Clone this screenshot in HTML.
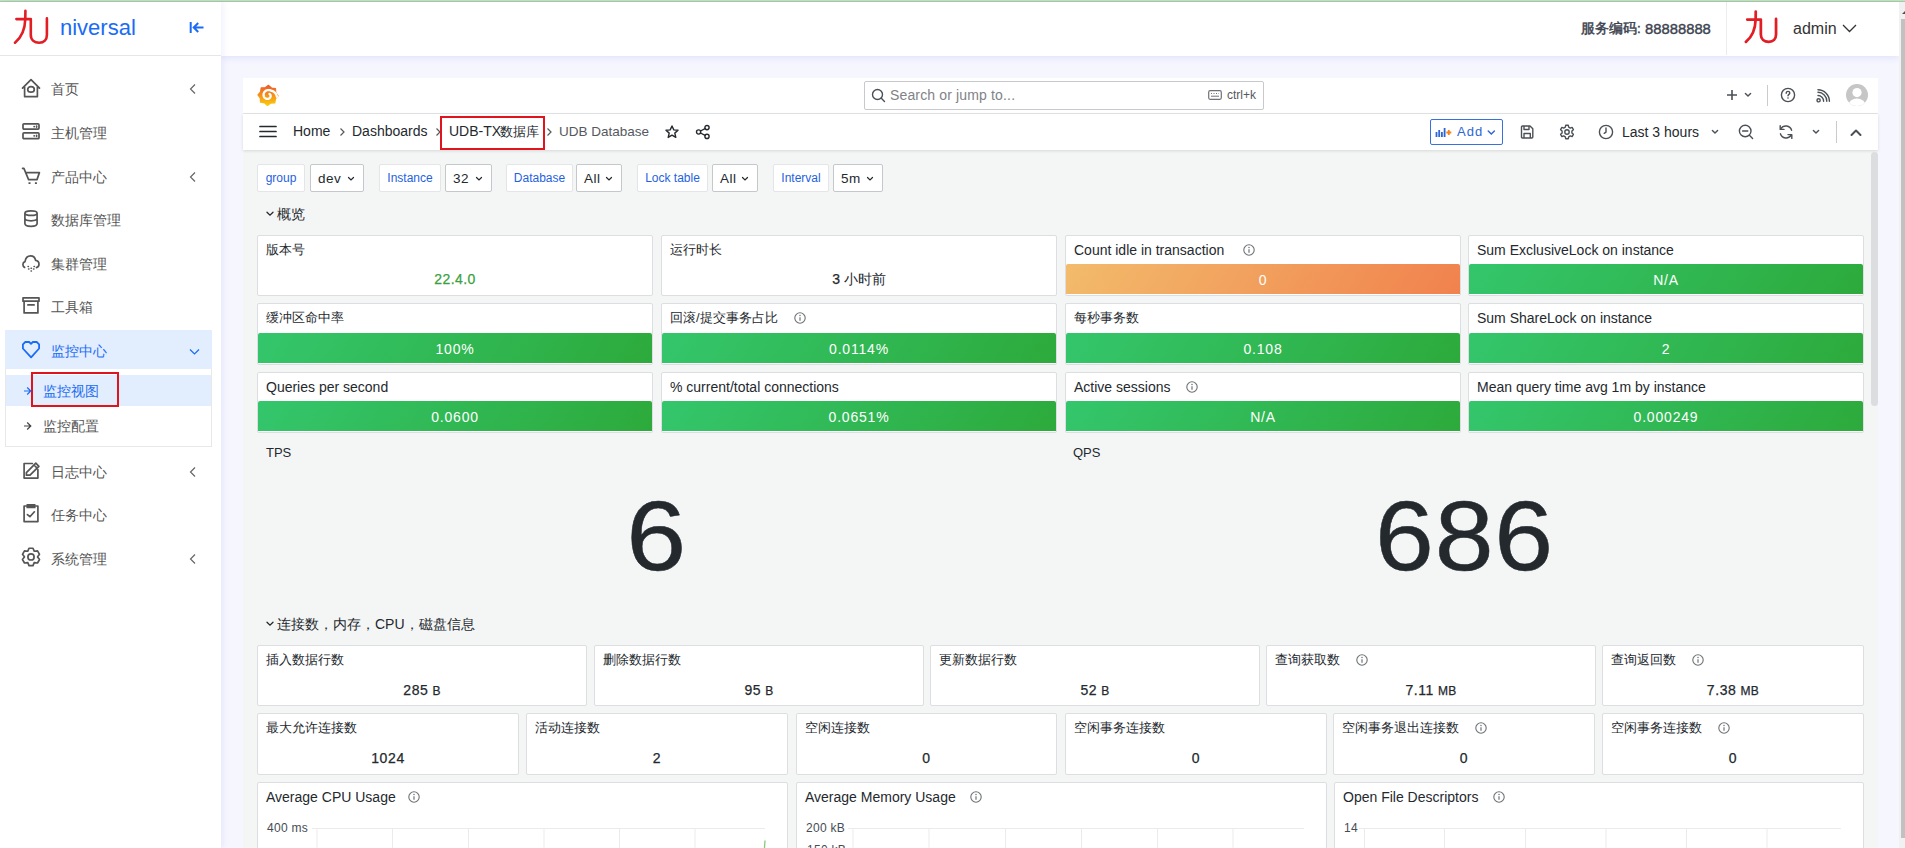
<!DOCTYPE html>
<html><head><meta charset="utf-8">
<style>
*{box-sizing:border-box}
html,body{margin:0;padding:0}
body{width:1905px;height:848px;overflow:hidden;position:relative;background:#f5f6fe;font-family:"Liberation Sans",sans-serif;color:#24292e}
.a{position:absolute}
.topline{left:0;top:0;width:1905px;height:2px;background:#c3e2c0;border-bottom:1px solid #a9c9a6}
/* sidebar */
#side{left:0;top:2px;width:221px;height:846px;background:#fff;box-shadow:2px 0 6px rgba(110,110,230,.10);z-index:5}
#side .logoline{left:0;top:53px;width:221px;height:1px;background:#e6e6e6}
.mi{position:absolute;left:0;width:221px;height:40px;font-size:14px;color:#555}
.mi .ic{position:absolute;left:22px;top:11px;width:18px;height:18px}
.mi .tx{position:absolute;left:51px;top:12px;line-height:16px;white-space:nowrap}
.mi .ch{position:absolute;left:188px;top:14px;width:10px;height:12px}
/* header */
#hdr{left:221px;top:2px;width:1678px;height:54px;background:#fff;box-shadow:0 2px 6px rgba(100,100,225,.13)}
/* scrollbar */
#sb{left:1899px;top:2px;width:6px;height:846px;background:#f1f1f1}
#sbt{left:1901px;top:19px;width:4px;height:819px;background:#c1c1c1}
/* grafana */
#gf{left:243px;top:78px;width:1635px;height:770px;background:#f4f5f5}
#gtop{left:243px;top:78px;width:1635px;height:36px;background:#fff;border-bottom:1px solid #e4e5e7}
#gbar{left:243px;top:114px;width:1635px;height:36px;background:#fff;box-shadow:0 1px 3px rgba(0,0,0,.12)}
.bc{position:absolute;top:0;font-size:14px;line-height:37px;white-space:nowrap;color:#24292e}
.sep{position:absolute;top:13px;width:8px;height:10px}
.ib{position:absolute}
.vl{position:absolute;top:164px;height:28px;background:#fff;border:1px solid #e3e5e8;border-radius:2px;font-size:12px;line-height:26px;color:#1f62e0;text-align:center;white-space:nowrap}
.vs{position:absolute;top:164px;height:28px;background:#fff;border:1px solid #c4c7cb;border-radius:2px;font-size:13.5px;line-height:27px;color:#24292e;padding-left:7px;white-space:nowrap;letter-spacing:.5px}
.vs svg{position:absolute;top:11px;width:8px;height:6px}
.rh{position:absolute;font-size:14px;line-height:16px;color:#24292e;white-space:nowrap}
.pn{position:absolute;background:#fff;border:1px solid #dcdee1;border-radius:2px}
.cj{font-size:13px;position:relative;top:-1.5px}
.pt{position:absolute;left:8px;top:6px;font-size:14px;line-height:17px;color:#24292e;white-space:nowrap}
.infi{display:inline-block;width:12px;height:12px;margin-left:16px;vertical-align:-1px}
.bar{position:absolute;left:0;right:0;bottom:1px;height:30px;border-radius:2px 2px 0 0;color:#fff;font-size:14px;line-height:32px;text-align:center;letter-spacing:.8px}
.gr{background:linear-gradient(120deg,#34c66c,#2daa3b)}
.or{background:linear-gradient(120deg,rgba(241,179,89,.89),rgba(239,114,56,.89))}
.val{position:absolute;left:0;right:0;text-align:center;font-size:14px;line-height:17px;color:#24292e;white-space:nowrap;-webkit-text-stroke:.25px currentColor}

</style></head><body>
<div class="a topline"></div>

<!-- SIDEBAR -->
<div id="side" class="a">
  <svg class="a" style="left:13px;top:7px" width="37" height="36" viewBox="0 0 37 36">
    <path d="M12.4 1.7 L12.3 10 C12 20 9 28 2 33.7 M3.4 10.1 H17.8 V26 C17.8 31 21.5 33.7 26.2 33.7 C31 33.7 33.9 30.5 33.9 26 V9.4" fill="none" stroke="#e21d23" stroke-width="2.6" stroke-linecap="round" stroke-linejoin="round"/>
  </svg>
  <div class="a" style="left:60px;top:11px;font-size:22px;line-height:30px;color:#1a6cf5;letter-spacing:0px">niversal</div>
  <svg class="a" style="left:189px;top:19px" width="16" height="13" viewBox="0 0 16 13">
    <path d="M1.7 1 V12 M14.5 6.5 H4.8 M9.2 2 L4.7 6.5 L9.2 11" fill="none" stroke="#1a6cf5" stroke-width="2"/>
  </svg>
  <div class="a logoline"></div>
  <div class="mi" style="top:67px"><svg class="ic" viewBox="0 0 18 18" style="overflow:visible"><path d="M0.5 8.1 L9 -0.4 L17.5 8.1 M2.6 7.2 V16.6 H15.4 V7.2" stroke="#555" stroke-width="1.7" fill="none" stroke-linecap="round" stroke-linejoin="round"/><ellipse cx="9" cy="9.4" rx="3.3" ry="2.7" stroke="#555" stroke-width="1.7" fill="none" stroke-linecap="round" stroke-linejoin="round"/></svg><span class="tx">首页</span><svg class="ch" viewBox="0 0 10 12"><path d="M7 1.5 L2.5 6 L7 10.5" fill="none" stroke="#666" stroke-width="1.2"/></svg></div>
<div class="mi" style="top:111px"><svg class="ic" viewBox="0 0 18 18" style="overflow:visible"><rect x="1" y="-0.1" width="16" height="5.2" rx="1" stroke="#555" stroke-width="1.7" fill="none" stroke-linecap="round" stroke-linejoin="round"/><rect x="1" y="8.8" width="16" height="5.9" rx="1" stroke="#555" stroke-width="1.7" fill="none" stroke-linecap="round" stroke-linejoin="round"/><path d="M12.1 2.6h.2M14.6 2.2v.9M12.1 11.8h.2M14.6 11.4v.9" stroke="#555" stroke-width="1.7" stroke-linecap="round"/></svg><span class="tx">主机管理</span></div>
<div class="mi" style="top:154.5px"><svg class="ic" viewBox="0 0 18 18" style="overflow:visible"><path d="M0.6 0.4 H1.9 L6.6 11.6 H15 L17.4 4.6 H4" stroke="#555" stroke-width="1.7" fill="none" stroke-linecap="round" stroke-linejoin="round"/><path d="M7.5 14.3v1.6M13.9 14.3v1.6" stroke="#555" stroke-width="2" /></svg><span class="tx">产品中心</span><svg class="ch" viewBox="0 0 10 12"><path d="M7 1.5 L2.5 6 L7 10.5" fill="none" stroke="#666" stroke-width="1.2"/></svg></div>
<div class="mi" style="top:198px"><svg class="ic" viewBox="0 0 18 18" style="overflow:visible"><path d="M2.9 2.2 C2.9 -0.8 15.1 -0.8 15.1 2.2 C15.1 5.2 2.9 5.2 2.9 2.2 Z M2.9 2.2 V12.5 C2.9 16.2 15.1 16.2 15.1 12.5 V2.2 M2.9 7.3 C2.9 10.6 15.1 10.6 15.1 7.3" stroke="#555" stroke-width="1.7" fill="none" stroke-linecap="round" stroke-linejoin="round"/></svg><span class="tx">数据库管理</span></div>
<div class="mi" style="top:241.5px"><svg class="ic" viewBox="0 0 18 18" style="overflow:visible"><path d="M2.6 12.4 C1.2 11.8 0.9 10.5 0.9 9.5 C0.9 8 1.7 7 3 6.6 C3.6 3.3 5.8 0.9 8.5 0.9 C11.3 0.9 13.2 3 13.6 5.4 C15.6 5.6 17 7.2 17 9.3 C17 11 16 12.2 14.5 12.6" stroke="#555" stroke-width="1.7" fill="none" stroke-linecap="round" stroke-linejoin="round"/><path d="M6.1 11.5h.3M12.1 11.5h.3M9.1 13.2h.3M6.6 14h.3M11.6 14h.3M9.1 16h.3" stroke="#555" stroke-width="1.6" stroke-linecap="round"/></svg><span class="tx">集群管理</span></div>
<div class="mi" style="top:285px"><svg class="ic" viewBox="0 0 18 18" style="overflow:visible"><path d="M1 -0.05 H17 V3.2 H1 Z M2.1 3.2 V14.9 H15.9 V3.2 M5.9 6.9 H12.1" stroke="#555" stroke-width="1.7" fill="none" stroke-linecap="round" stroke-linejoin="round"/></svg><span class="tx">工具箱</span></div>
<div class="mi" style="top:449.5px"><svg class="ic" viewBox="0 0 18 18" style="overflow:visible"><path d="M10.4 0.5 H2.1 V15.1 H15.9 V6.6" stroke="#555" stroke-width="1.7" fill="none" stroke-linecap="round" stroke-linejoin="round"/><path d="M13.8 0.2 L16.9 3.3 L8 12.2 L4.4 12.2 L4.4 9.6 Z M12 2 L15.1 5.1" stroke="#555" stroke-width="1.7" fill="none" stroke-linecap="round" stroke-linejoin="round"/></svg><span class="tx">日志中心</span><svg class="ch" viewBox="0 0 10 12"><path d="M7 1.5 L2.5 6 L7 10.5" fill="none" stroke="#666" stroke-width="1.2"/></svg></div>
<div class="mi" style="top:493px"><svg class="ic" viewBox="0 0 18 18" style="overflow:visible"><path d="M4.2 0 H2.1 V15.6 H15.9 V0 H13.8" stroke="#555" stroke-width="1.7" fill="none" stroke-linecap="round" stroke-linejoin="round"/><rect x="4.4" y="-1.9" width="9.2" height="4.2" rx=".6" fill="#555"/><path d="M5.4 8.6 L7.9 10.7 L12.4 5.8" stroke="#555" stroke-width="1.7" fill="none" stroke-linecap="round" stroke-linejoin="round"/></svg><span class="tx">任务中心</span></div>
<div class="mi" style="top:536.5px"><svg class="ic" viewBox="0 0 18 18" style="overflow:visible"><path d="M5.81 1.12 L7.00 -1.77 L11.00 -1.77 L12.19 1.12 L12.41 1.25 L15.51 0.83 L17.51 4.30 L15.60 6.77 L15.60 7.03 L17.51 9.50 L15.51 12.97 L12.41 12.55 L12.19 12.68 L11.00 15.57 L7.00 15.57 L5.81 12.68 L5.59 12.55 L2.49 12.97 L0.49 9.50 L2.40 7.03 L2.40 6.77 L0.49 4.30 L2.49 0.83 L5.59 1.25 Z" stroke="#555" stroke-width="1.7" fill="none" stroke-linecap="round" stroke-linejoin="round" stroke-width="1.6"/><circle cx="9" cy="6.9" r="3.1" stroke="#555" stroke-width="1.7" fill="none" stroke-linecap="round" stroke-linejoin="round"/></svg><span class="tx">系统管理</span><svg class="ch" viewBox="0 0 10 12"><path d="M7 1.5 L2.5 6 L7 10.5" fill="none" stroke="#666" stroke-width="1.2"/></svg></div>
<div class="a" style="left:5px;top:328px;width:207px;height:39px;background:#e2edfd"></div>
<div class="mi" style="top:329px;color:#1a6cf5"><svg class="ic" viewBox="0 0 18 18" style="overflow:visible"><path d="M9 1.8 L7.2 0 H3.3 L0.9 2.3 V6.5 L9.1 15.3 L17.1 6.5 V2.3 L14.7 0 H10.8 Z" stroke="#1a6cf5" stroke-width="1.8" fill="none" stroke-linejoin="round"/></svg><span class="tx">监控中心</span><svg class="ch" style="left:189px;top:17px;width:11px;height:8px" viewBox="0 0 11 8"><path d="M1 1.5 L5.5 6 L10 1.5" fill="none" stroke="#1a6cf5" stroke-width="1.2"/></svg></div>
<div class="a" style="left:5px;top:367px;width:207px;height:78px;border:1px solid #e8e8e8;border-top:none;background:#fff"></div>
<div class="a" style="left:6px;top:373px;width:205px;height:31px;background:#e2edfd"></div>
<div class="a" style="left:31px;top:370px;width:88px;height:35px;border:2px solid #e0141c"></div>
<svg class="a" style="left:23px;top:384px" width="9" height="10" viewBox="0 0 9 10"><path d="M1 5 H7.5 M4.2 1.5 L7.8 5 L4.2 8.5" fill="none" stroke="#1a6cf5" stroke-width="1.2"/></svg>
<div class="a" style="left:43px;top:381px;font-size:14px;line-height:16px;color:#1a6cf5">监控视图</div>
<svg class="a" style="left:23px;top:419px" width="9" height="10" viewBox="0 0 9 10"><path d="M1 5 H7.5 M4.2 1.5 L7.8 5 L4.2 8.5" fill="none" stroke="#444" stroke-width="1.2"/></svg>
<div class="a" style="left:43px;top:416px;font-size:14px;line-height:16px;color:#555">监控配置</div>
</div>

<!-- 
  <div class="a" style="left:1360px;top:18px;font-size:13.5px;line-height:18px;color:#3d4350;white-space:nowrap;-webkit-text-stroke:.45px #3d4350">服务编码:</div><div class="a" style="left:1424px;top:18px;font-size:14.8px;line-height:18px;color:#3d4350;white-space:nowrap;-webkit-text-stroke:.4px #3d4350">88888888</div>
  <div class="a" style="left:1505px;top:0;width:1px;height:53px;background:#ececec"></div>
  <svg class="a" style="left:1523px;top:8px" width="35" height="34" viewBox="0 0 37 36"><path d="M12.4 1.7 L12.3 10 C12 20 9 28 2 33.7 M3.4 10.1 H17.8 V26 C17.8 31 21.5 33.7 26.2 33.7 C31 33.7 33.9 30.5 33.9 26 V9.4" fill="none" stroke="#e21d23" stroke-width="2.9" stroke-linecap="round" stroke-linejoin="round"/></svg>
  <div class="a" style="left:1572px;top:17px;font-size:16px;line-height:20px;color:#333">admin</div>
  <svg class="a" style="left:1621px;top:22px" width="15" height="9" viewBox="0 0 15 9"><path d="M1 1 L7.5 7.5 L14 1" fill="none" stroke="#333" stroke-width="1.3"/></svg>
 -->
<div id="hdr" class="a">
  
  <div class="a" style="left:1360px;top:18px;font-size:13.5px;line-height:18px;color:#3d4350;white-space:nowrap;-webkit-text-stroke:.45px #3d4350">服务编码:</div><div class="a" style="left:1424px;top:18px;font-size:14.8px;line-height:18px;color:#3d4350;white-space:nowrap;-webkit-text-stroke:.4px #3d4350">88888888</div>
  <div class="a" style="left:1505px;top:0;width:1px;height:53px;background:#ececec"></div>
  <svg class="a" style="left:1523px;top:8px" width="35" height="34" viewBox="0 0 37 36"><path d="M12.4 1.7 L12.3 10 C12 20 9 28 2 33.7 M3.4 10.1 H17.8 V26 C17.8 31 21.5 33.7 26.2 33.7 C31 33.7 33.9 30.5 33.9 26 V9.4" fill="none" stroke="#e21d23" stroke-width="2.9" stroke-linecap="round" stroke-linejoin="round"/></svg>
  <div class="a" style="left:1572px;top:17px;font-size:16px;line-height:20px;color:#333">admin</div>
  <svg class="a" style="left:1621px;top:22px" width="15" height="9" viewBox="0 0 15 9"><path d="M1 1 L7.5 7.5 L14 1" fill="none" stroke="#333" stroke-width="1.3"/></svg>

</div>
<div id="sb" class="a"></div>
<div id="sbt" class="a"></div>
<div class="a" style="left:1902px;top:11px;width:0;height:0;border-left:3px solid transparent;border-right:3px solid transparent;border-bottom:3px solid #505050"></div>

<!-- GRAFANA -->
<div id="gf" class="a"></div>
  <div id="gtop" class="a"></div>
<svg class="a" style="left:257px;top:84px" width="22" height="23" viewBox="0 0 22 23">
<defs><linearGradient id="gl" x1="0" y1="0" x2="0" y2="1"><stop offset="0" stop-color="#f05a28"/><stop offset="1" stop-color="#fbca0a"/></linearGradient></defs>
<path d="M11.50 1.41 L14.47 4.08 L18.42 4.69 L18.63 8.68 L20.99 11.90 L18.32 14.87 L17.71 18.82 L13.72 19.03 L10.50 21.39 L7.53 18.72 L3.58 18.11 L3.37 14.12 L1.01 10.90 L3.68 7.93 L4.29 3.98 L8.28 3.77 Z" fill="url(#gl)" stroke="url(#gl)" stroke-width="1.4" stroke-linejoin="round"/>
<path d="M19.90 12.74 L19.71 11.92 L19.45 11.14 L19.12 10.41 L18.72 9.74 L18.28 9.13 L17.79 8.59 L17.27 8.12 L16.72 7.72 L16.14 7.38 L15.56 7.13 L14.97 6.94 L14.39 6.82 L13.94 6.58 L13.46 6.38 L12.98 6.23 L12.49 6.12 L12.00 6.06 L11.51 6.04 L11.03 6.07 L10.55 6.14 L10.09 6.26 L9.64 6.41 L9.21 6.60 L8.81 6.83 L8.44 7.09 L8.09 7.39 L7.77 7.70 L7.49 8.05 L7.24 8.41 L7.03 8.79 L6.86 9.18 L6.73 9.59 L6.63 10.00 L6.57 10.41 L6.56 10.82 L6.57 11.22 L6.63 11.62 L6.72 12.01 L6.84 12.38 L7.00 12.73 L7.18 13.07 L7.40 13.38 L7.63 13.67 L7.89 13.93 L8.17 14.16 L8.46 14.36 L8.77 14.54 L9.09 14.68 L9.42 14.79 L9.75 14.87 L10.08 14.92 L10.41 14.93 L10.73 14.92 L11.05 14.88 L11.36 14.80 L11.66 14.71 L11.94 14.58 L12.20 14.44 L12.44 14.27 L12.67 14.08 L12.87 13.88 L13.05 13.66 L13.21 13.43 L13.34 13.19 L13.45 12.94 L13.53 12.69 L13.59 12.44 L13.62 12.19 L13.63 11.94 L13.61 11.69 L13.58 11.45 L13.52 11.22 L13.44 11.01 L13.34 10.80 L13.23 10.61 L13.10 10.43 L12.96 10.27 L12.81 10.13 L12.64 10.01 L12.47 9.90" fill="none" stroke="#fff" stroke-width="2.3" stroke-linecap="round"/>
</svg>
<div class="a" style="left:864px;top:81px;width:400px;height:29px;border:1px solid #c7c9cc;border-radius:2px;background:#fff"></div>
<svg class="a" style="left:871px;top:88px" width="15" height="15" viewBox="0 0 15 15"><circle cx="6.5" cy="6.5" r="5" stroke="#4b5056" stroke-width="1.4" fill="none" stroke-linecap="round" stroke-linejoin="round"/><path d="M10.3 10.3 L13.5 13.5" stroke="#4b5056" stroke-width="1.4" fill="none" stroke-linecap="round" stroke-linejoin="round"/></svg>
<div class="a" style="left:890px;top:87px;font-size:14px;line-height:16px;color:#7f8387;white-space:nowrap;letter-spacing:.15px">Search or jump to...</div>
<svg class="a" style="left:1208px;top:90px" width="14" height="10" viewBox="0 0 14 10"><rect x="0.7" y="0.7" width="12.6" height="8.6" rx="1.5" stroke="#6e7276" stroke-width="1.2" fill="none"/><path d="M3 3.5h1M5.5 3.5h1M8 3.5h1M10.5 3.5h.5M3 6.2h8" stroke="#6e7276" stroke-width="1"/></svg>
<div class="a" style="left:1227px;top:88px;font-size:12px;line-height:14px;color:#55595e;white-space:nowrap">ctrl+k</div>
<svg class="a" style="left:1726px;top:89px" width="12" height="12" viewBox="0 0 12 12"><path d="M6 1 V11 M1 6 H11" stroke="#4b5056" stroke-width="1.6"/></svg>
<svg class="a" style="left:1744px;top:92px" width="8" height="6" viewBox="0 0 8 6"><path d="M1.4 1.4 L4 4 L6.6 1.4" stroke="#4b5056" stroke-width="1.4" fill="none" stroke-linecap="round" stroke-linejoin="round"/></svg>
<div class="a" style="left:1767px;top:85px;width:1px;height:21px;background:#c9cbce"></div>
<svg class="a" style="left:1780px;top:87px" width="16" height="16" viewBox="0 0 16 16"><circle cx="8" cy="8" r="6.6" stroke="#4b5056" stroke-width="1.4" fill="none" stroke-linecap="round" stroke-linejoin="round" stroke-width="1.3"/><path d="M6.2 6.3 C6.2 5 7 4.4 8 4.4 C9 4.4 9.8 5 9.8 6 C9.8 7.3 8 7.4 8 8.8" stroke="#4b5056" stroke-width="1.4" fill="none" stroke-linecap="round" stroke-linejoin="round" stroke-width="1.3"/><circle cx="8" cy="11" r=".8" fill="#4b5056"/></svg>
<svg class="a" style="left:1816px;top:89px" width="15" height="14" viewBox="0 0 15 14"><circle cx="2.6" cy="11.3" r="1.6" stroke="#4b5056" stroke-width="1.4" fill="none" stroke-linecap="round" stroke-linejoin="round" stroke-width="1.3"/><path d="M2 6.5 A5.6 5.6 0 0 1 7.6 12.2 M2 3.3 A8.8 8.8 0 0 1 10.8 12.2 M2 0.8 A11.4 11.4 0 0 1 13.4 12.2" stroke="#4b5056" stroke-width="1.4" fill="none" stroke-linecap="round" stroke-linejoin="round" stroke-width="1.4"/></svg>
<svg class="a" style="left:1846px;top:84px" width="22" height="22" viewBox="0 0 22 22"><defs><clipPath id="av"><circle cx="11" cy="11" r="11"/></clipPath></defs><circle cx="11" cy="11" r="11" fill="#c6c6c6"/><g clip-path="url(#av)"><circle cx="11" cy="8.6" r="4.6" fill="#fff"/><ellipse cx="11" cy="21" rx="8.5" ry="6.5" fill="#fff"/></g></svg>

  <div id="gbar" class="a"></div>

<svg class="a" style="left:259px;top:125px" width="18" height="13" viewBox="0 0 18 13"><path d="M1 1.5 H17 M1 6.5 H17 M1 11.5 H17" stroke="#24292e" stroke-width="1.7" stroke-linecap="round"/></svg>
<div class="bc" style="left:293px;top:113px">Home</div>
<svg class="sep" style="left:338px;top:127px" viewBox="0 0 8 10"><path d="M2.5 1.5 L6 5 L2.5 8.5" fill="none" stroke="#55595e" stroke-width="1.2"/></svg>
<div class="bc" style="left:352px;top:113px">Dashboards</div>
<svg class="sep" style="left:434px;top:127px" viewBox="0 0 8 10"><path d="M2.5 1.5 L6 5 L2.5 8.5" fill="none" stroke="#55595e" stroke-width="1.2"/></svg>
<div class="bc" style="left:449px;top:113px">UDB-TX<span style="font-size:13px;margin-left:-1px">数据库</span></div>
<div class="a" style="left:440px;top:116px;width:105px;height:34px;border:2px solid #e0141c"></div>
<svg class="sep" style="left:545px;top:127px" viewBox="0 0 8 10"><path d="M2.5 1.5 L6 5 L2.5 8.5" fill="none" stroke="#55595e" stroke-width="1.2"/></svg>
<div class="bc" style="left:559px;top:113px;color:#55595e;font-size:13.5px">UDB Database</div>
<svg class="a" style="left:665px;top:125px" width="14" height="14" viewBox="0 0 14 14"><path d="M7 1 L8.8 4.9 L13 5.3 L9.8 8.1 L10.8 12.4 L7 10.2 L3.2 12.4 L4.2 8.1 L1 5.3 L5.2 4.9 Z" stroke="#24292e" stroke-width="1.4" fill="none" stroke-linecap="round" stroke-linejoin="round"/></svg>
<svg class="a" style="left:695px;top:124px" width="16" height="16" viewBox="0 0 16 16"><circle cx="3.6" cy="8" r="2.1" stroke="#24292e" stroke-width="1.4" fill="none" stroke-linecap="round" stroke-linejoin="round"/><circle cx="12" cy="3.6" r="2.1" stroke="#24292e" stroke-width="1.4" fill="none" stroke-linecap="round" stroke-linejoin="round"/><circle cx="12" cy="12.4" r="2.1" stroke="#24292e" stroke-width="1.4" fill="none" stroke-linecap="round" stroke-linejoin="round"/><path d="M5.5 7 L10.1 4.6 M5.5 9 L10.1 11.4" stroke="#24292e" stroke-width="1.4" fill="none" stroke-linecap="round" stroke-linejoin="round"/></svg>

<div class="a" style="left:1430px;top:119px;width:73px;height:26px;border:1.5px solid #3871dc;border-radius:2px"></div>
<svg class="a" style="left:1435px;top:126px" width="17" height="12" viewBox="0 0 17 12"><path d="M1.5 6 V11 M4.2 4 V11 M6.9 6 V11 M9.6 2 V11" stroke="#2c66d6" stroke-width="1.8"/><path d="M11.3 6.5 H16.3 M13.8 4 V9" stroke="#f5821f" stroke-width="1.8"/></svg>
<div class="a" style="left:1457px;top:123px;font-size:13px;line-height:17px;color:#2c66d6;white-space:nowrap;letter-spacing:1px">Add</div>
<svg class="a" style="left:1487px;top:130px" width="9" height="6" viewBox="0 0 9 6"><path d="M1.2 1 L4.3 4.1 L7.4 1" fill="none" stroke="#2c66d6" stroke-width="1.4" stroke-linecap="round"/></svg>
<svg class="a" style="left:1520px;top:125px" width="14" height="14" viewBox="0 0 14 14"><path d="M1.5 2 Q1.5 1 2.5 1 H10 L12.8 3.8 V12 Q12.8 13 11.8 13 H2.5 Q1.5 13 1.5 12 Z M4 1 V4.5 H9 V1 M4 13 V8.5 H10.3 V13" stroke="#4b5056" stroke-width="1.4" fill="none" stroke-linecap="round" stroke-linejoin="round"/></svg>
<svg class="a" style="left:1559px;top:124px" width="16" height="16" viewBox="0 0 16 16"><path d="M6.7 1.3 H9.3 L9.7 3.2 L11.3 4.1 L13.1 3.4 L14.4 5.7 L12.9 7 V9 L14.4 10.3 L13.1 12.6 L11.3 11.9 L9.7 12.8 L9.3 14.7 H6.7 L6.3 12.8 L4.7 11.9 L2.9 12.6 L1.6 10.3 L3.1 9 V7 L1.6 5.7 L2.9 3.4 L4.7 4.1 L6.3 3.2 Z" stroke="#4b5056" stroke-width="1.4" fill="none" stroke-linecap="round" stroke-linejoin="round" stroke-width="1.3"/><circle cx="8" cy="8" r="2.2" stroke="#4b5056" stroke-width="1.4" fill="none" stroke-linecap="round" stroke-linejoin="round" stroke-width="1.3"/></svg>
<svg class="a" style="left:1598px;top:124px" width="16" height="16" viewBox="0 0 16 16"><circle cx="8" cy="8" r="6.6" stroke="#4b5056" stroke-width="1.4" fill="none" stroke-linecap="round" stroke-linejoin="round" stroke-width="1.3"/><path d="M8 4 V8.2 L6.2 9.3" stroke="#4b5056" stroke-width="1.4" fill="none" stroke-linecap="round" stroke-linejoin="round" stroke-width="1.3"/></svg>
<div class="a" style="left:1622px;top:124px;font-size:14px;line-height:17px;color:#24292e;white-space:nowrap">Last 3 hours</div>
<svg class="a" style="left:1711px;top:129px" width="8" height="6" viewBox="0 0 8 6"><path d="M1.4 1.4 L4 4 L6.6 1.4" stroke="#4b5056" stroke-width="1.4" fill="none" stroke-linecap="round" stroke-linejoin="round"/></svg>
<svg class="a" style="left:1738px;top:124px" width="16" height="16" viewBox="0 0 16 16"><circle cx="7.2" cy="7" r="5.8" stroke="#4b5056" stroke-width="1.4" fill="none" stroke-linecap="round" stroke-linejoin="round" stroke-width="1.4"/><path d="M4.6 7 H9.8 M11.4 11.2 L14.6 14.4" stroke="#4b5056" stroke-width="1.4" fill="none" stroke-linecap="round" stroke-linejoin="round" stroke-width="1.4"/></svg>
<svg class="a" style="left:1778px;top:124px" width="16" height="16" viewBox="0 0 16 16"><path d="M13.6 6.2 A6 6 0 0 0 2.8 4.8 M2.4 9.8 A6 6 0 0 0 13.2 11.2" stroke="#4b5056" stroke-width="1.4" fill="none" stroke-linecap="round" stroke-linejoin="round" stroke-width="1.4"/><path d="M2.2 1.6 V5.4 H6" stroke="#4b5056" stroke-width="1.4" fill="none" stroke-linecap="round" stroke-linejoin="round" stroke-width="1.4"/><path d="M13.8 14.4 V10.6 H10" stroke="#4b5056" stroke-width="1.4" fill="none" stroke-linecap="round" stroke-linejoin="round" stroke-width="1.4"/></svg>
<svg class="a" style="left:1812px;top:129px" width="8" height="6" viewBox="0 0 8 6"><path d="M1.4 1.4 L4 4 L6.6 1.4" stroke="#4b5056" stroke-width="1.4" fill="none" stroke-linecap="round" stroke-linejoin="round"/></svg>
<div class="a" style="left:1836px;top:121px;width:1px;height:22px;background:#c9cbce"></div>
<svg class="a" style="left:1850px;top:128px" width="12" height="9" viewBox="0 0 12 9"><path d="M1.5 7 L6 2.5 L10.5 7" stroke="#4b5056" stroke-width="2" fill="none" stroke-linecap="round" stroke-linejoin="round"/></svg>

<div class="vl" style="left:257px;width:48px">group</div>
<div class="vs" style="left:310px;width:54px">dev<svg viewBox="0 0 8 6" style="left:36px"><path d="M1.5 1.5 L4 4 L6.5 1.5" fill="none" stroke="#24292e" stroke-width="1.2" stroke-linecap="round"/></svg></div>
<div class="vl" style="left:379px;width:62px">Instance</div>
<div class="vs" style="left:445px;width:47px">32<svg viewBox="0 0 8 6" style="left:29px"><path d="M1.5 1.5 L4 4 L6.5 1.5" fill="none" stroke="#24292e" stroke-width="1.2" stroke-linecap="round"/></svg></div>
<div class="vl" style="left:506px;width:67px">Database</div>
<div class="vs" style="left:576px;width:46px">All<svg viewBox="0 0 8 6" style="left:28px"><path d="M1.5 1.5 L4 4 L6.5 1.5" fill="none" stroke="#24292e" stroke-width="1.2" stroke-linecap="round"/></svg></div>
<div class="vl" style="left:637px;width:71px">Lock table</div>
<div class="vs" style="left:712px;width:46px">All<svg viewBox="0 0 8 6" style="left:28px"><path d="M1.5 1.5 L4 4 L6.5 1.5" fill="none" stroke="#24292e" stroke-width="1.2" stroke-linecap="round"/></svg></div>
<div class="vl" style="left:773px;width:56px">Interval</div>
<div class="vs" style="left:833px;width:50px">5m<svg viewBox="0 0 8 6" style="left:32px"><path d="M1.5 1.5 L4 4 L6.5 1.5" fill="none" stroke="#24292e" stroke-width="1.2" stroke-linecap="round"/></svg></div>
<svg class="a" style="left:266px;top:211px" width="8" height="6" viewBox="0 0 8 6"><path d="M1 1.2 L4 4.2 L7 1.2" fill="none" stroke="#24292e" stroke-width="1.3" stroke-linecap="round"/></svg><div class="rh" style="left:277px;top:206px">概览</div>
<div class="pn" style="left:257px;top:235.2px;width:396px;height:61.2px"><div class="pt"><span class="cj">版本号</span></div><div class="val" style="top:35px;color:#3b9f3f;letter-spacing:.4px">22.4.0</div></div>
<div class="pn" style="left:661px;top:235.2px;width:396px;height:61.2px"><div class="pt"><span class="cj">运行时长</span></div><div class="val" style="top:35px">3 <span style="-webkit-text-stroke:0">小时前</span></div></div>
<div class="pn" style="left:1065px;top:235.2px;width:396px;height:61.2px"><div class="pt">Count idle in transaction<svg class="infi" style="margin-left:19px" viewBox="0 0 12 12"><circle cx="6" cy="6" r="5.2" fill="none" stroke="#6e7276" stroke-width="1.1"/><path d="M6 5.3 V8.8" stroke="#6e7276" stroke-width="1.2"/><circle cx="6" cy="3.5" r=".75" fill="#6e7276"/></svg></div><div class="bar or">0</div></div>
<div class="pn" style="left:1468px;top:235.2px;width:396px;height:61.2px"><div class="pt">Sum ExclusiveLock on instance</div><div class="bar gr">N/A</div></div>
<div class="pn" style="left:257px;top:303.4px;width:396px;height:61.2px"><div class="pt"><span class="cj">缓冲区命中率</span></div><div class="bar gr">100%</div></div>
<div class="pn" style="left:661px;top:303.4px;width:396px;height:61.2px"><div class="pt"><span class="cj">回滚/提交事务占比</span><svg class="infi" viewBox="0 0 12 12"><circle cx="6" cy="6" r="5.2" fill="none" stroke="#6e7276" stroke-width="1.1"/><path d="M6 5.3 V8.8" stroke="#6e7276" stroke-width="1.2"/><circle cx="6" cy="3.5" r=".75" fill="#6e7276"/></svg></div><div class="bar gr">0.0114%</div></div>
<div class="pn" style="left:1065px;top:303.4px;width:396px;height:61.2px"><div class="pt"><span class="cj">每秒事务数</span></div><div class="bar gr">0.108</div></div>
<div class="pn" style="left:1468px;top:303.4px;width:396px;height:61.2px"><div class="pt">Sum ShareLock on instance</div><div class="bar gr">2</div></div>
<div class="pn" style="left:257px;top:371.6px;width:396px;height:61.2px"><div class="pt">Queries per second</div><div class="bar gr">0.0600</div></div>
<div class="pn" style="left:661px;top:371.6px;width:396px;height:61.2px"><div class="pt">% current/total connections</div><div class="bar gr">0.0651%</div></div>
<div class="pn" style="left:1065px;top:371.6px;width:396px;height:61.2px"><div class="pt">Active sessions<svg class="infi" viewBox="0 0 12 12"><circle cx="6" cy="6" r="5.2" fill="none" stroke="#6e7276" stroke-width="1.1"/><path d="M6 5.3 V8.8" stroke="#6e7276" stroke-width="1.2"/><circle cx="6" cy="3.5" r=".75" fill="#6e7276"/></svg></div><div class="bar gr">N/A</div></div>
<div class="pn" style="left:1468px;top:371.6px;width:396px;height:61.2px"><div class="pt">Mean query time avg 1m by instance</div><div class="bar gr">0.000249</div></div>
<div class="a" style="left:266px;top:446px;font-size:13px;line-height:14px;color:#24292e">TPS</div>
<div class="a" style="left:1073px;top:446px;font-size:13px;line-height:14px;color:#24292e">QPS</div>
<div class="a" style="left:257px;top:466px;width:799px;text-align:center;font-size:98px;line-height:140px;color:#24292e;transform:scaleX(1.1);letter-spacing:.6px;-webkit-text-stroke:.5px #24292e">6</div>
<div class="a" style="left:1065px;top:466px;width:799px;text-align:center;font-size:98px;line-height:140px;color:#24292e;transform:scaleX(1.08);letter-spacing:.7px;-webkit-text-stroke:.5px #24292e">686</div>
<svg class="a" style="left:266px;top:621px" width="8" height="6" viewBox="0 0 8 6"><path d="M1 1.2 L4 4.2 L7 1.2" fill="none" stroke="#24292e" stroke-width="1.3" stroke-linecap="round"/></svg><div class="rh" style="left:277px;top:616px">连接数，内存，CPU，磁盘信息</div>
<div class="pn" style="left:257px;top:645.4px;width:330px;height:60.6px"><div class="pt"><span class="cj">插入数据行数</span></div><div class="val" style="top:36px;letter-spacing:.6px">285<span style="font-size:12px;margin-left:4px;letter-spacing:.3px">B</span></div></div>
<div class="pn" style="left:594px;top:645.4px;width:330px;height:60.6px"><div class="pt"><span class="cj">删除数据行数</span></div><div class="val" style="top:36px;letter-spacing:.6px">95<span style="font-size:12px;margin-left:4px;letter-spacing:.3px">B</span></div></div>
<div class="pn" style="left:930px;top:645.4px;width:330px;height:60.6px"><div class="pt"><span class="cj">更新数据行数</span></div><div class="val" style="top:36px;letter-spacing:.6px">52<span style="font-size:12px;margin-left:4px;letter-spacing:.3px">B</span></div></div>
<div class="pn" style="left:1266px;top:645.4px;width:330px;height:60.6px"><div class="pt"><span class="cj">查询获取数</span><svg class="infi" viewBox="0 0 12 12"><circle cx="6" cy="6" r="5.2" fill="none" stroke="#6e7276" stroke-width="1.1"/><path d="M6 5.3 V8.8" stroke="#6e7276" stroke-width="1.2"/><circle cx="6" cy="3.5" r=".75" fill="#6e7276"/></svg></div><div class="val" style="top:36px;letter-spacing:.6px">7.11<span style="font-size:12px;margin-left:4px;letter-spacing:.3px">MB</span></div></div>
<div class="pn" style="left:1602px;top:645.4px;width:262px;height:60.6px"><div class="pt"><span class="cj">查询返回数</span><svg class="infi" viewBox="0 0 12 12"><circle cx="6" cy="6" r="5.2" fill="none" stroke="#6e7276" stroke-width="1.1"/><path d="M6 5.3 V8.8" stroke="#6e7276" stroke-width="1.2"/><circle cx="6" cy="3.5" r=".75" fill="#6e7276"/></svg></div><div class="val" style="top:36px;letter-spacing:.6px">7.38<span style="font-size:12px;margin-left:4px;letter-spacing:.3px">MB</span></div></div>
<div class="pn" style="left:257px;top:713.4px;width:262px;height:61.2px"><div class="pt"><span class="cj">最大允许连接数</span></div><div class="val" style="top:36px;letter-spacing:.6px">1024</div></div>
<div class="pn" style="left:526px;top:713.4px;width:262px;height:61.2px"><div class="pt"><span class="cj">活动连接数</span></div><div class="val" style="top:36px;letter-spacing:.6px">2</div></div>
<div class="pn" style="left:796px;top:713.4px;width:261px;height:61.2px"><div class="pt"><span class="cj">空闲连接数</span></div><div class="val" style="top:36px;letter-spacing:.6px">0</div></div>
<div class="pn" style="left:1065px;top:713.4px;width:262px;height:61.2px"><div class="pt"><span class="cj">空闲事务连接数</span></div><div class="val" style="top:36px;letter-spacing:.6px">0</div></div>
<div class="pn" style="left:1333px;top:713.4px;width:262px;height:61.2px"><div class="pt"><span class="cj">空闲事务退出连接数</span><svg class="infi" viewBox="0 0 12 12"><circle cx="6" cy="6" r="5.2" fill="none" stroke="#6e7276" stroke-width="1.1"/><path d="M6 5.3 V8.8" stroke="#6e7276" stroke-width="1.2"/><circle cx="6" cy="3.5" r=".75" fill="#6e7276"/></svg></div><div class="val" style="top:36px;letter-spacing:.6px">0</div></div>
<div class="pn" style="left:1602px;top:713.4px;width:262px;height:61.2px"><div class="pt"><span class="cj">空闲事务连接数</span><svg class="infi" viewBox="0 0 12 12"><circle cx="6" cy="6" r="5.2" fill="none" stroke="#6e7276" stroke-width="1.1"/><path d="M6 5.3 V8.8" stroke="#6e7276" stroke-width="1.2"/><circle cx="6" cy="3.5" r=".75" fill="#6e7276"/></svg></div><div class="val" style="top:36px;letter-spacing:.6px">0</div></div>
<div class="pn" style="left:257px;top:782.2px;width:531px;height:80px"><div class="pt">Average CPU Usage<svg class="infi" style="margin-left:12.5px" viewBox="0 0 12 12"><circle cx="6" cy="6" r="5.2" fill="none" stroke="#6e7276" stroke-width="1.1"/><path d="M6 5.3 V8.8" stroke="#6e7276" stroke-width="1.2"/><circle cx="6" cy="3.5" r=".75" fill="#6e7276"/></svg></div><div class="a" style="left:9px;top:38px;font-size:12px;line-height:14px;color:#464c54;letter-spacing:.3px">400 ms</div><svg class="a" style="left:-1px;top:-1px" width="510" height="80" viewBox="0 0 510 80"><path d="M55 46.5 H508" stroke="#ebebec" stroke-width="1"/><path d="M60.0 46.5 V80" stroke="#ebebec" stroke-width="1"/><path d="M135.5 46.5 V80" stroke="#ebebec" stroke-width="1"/><path d="M211.5 46.5 V80" stroke="#ebebec" stroke-width="1"/><path d="M287.0 46.5 V80" stroke="#ebebec" stroke-width="1"/><path d="M362.5 46.5 V80" stroke="#ebebec" stroke-width="1"/><path d="M438.0 46.5 V80" stroke="#ebebec" stroke-width="1"/><path d="M508 58.5 L507.2 70" stroke="#73bf69" stroke-width="1.3" opacity=".85"/></svg></div>
<div class="pn" style="left:796px;top:782.2px;width:531px;height:80px"><div class="pt">Average Memory Usage<svg class="infi" style="margin-left:14px" viewBox="0 0 12 12"><circle cx="6" cy="6" r="5.2" fill="none" stroke="#6e7276" stroke-width="1.1"/><path d="M6 5.3 V8.8" stroke="#6e7276" stroke-width="1.2"/><circle cx="6" cy="3.5" r=".75" fill="#6e7276"/></svg></div><div class="a" style="left:9px;top:38px;font-size:12px;line-height:14px;color:#464c54;letter-spacing:.3px">200 kB</div><div class="a" style="left:10px;top:60px;font-size:12px;line-height:14px;color:#464c54;letter-spacing:.3px">150 kB</div><svg class="a" style="left:-2px;top:-1px" width="511" height="80" viewBox="0 0 511 80"><path d="M53 46.5 H509" stroke="#ebebec" stroke-width="1"/><path d="M58.0 46.5 V80" stroke="#ebebec" stroke-width="1"/><path d="M134.0 46.5 V80" stroke="#ebebec" stroke-width="1"/><path d="M210.5 46.5 V80" stroke="#ebebec" stroke-width="1"/><path d="M286.5 46.5 V80" stroke="#ebebec" stroke-width="1"/><path d="M362.5 46.5 V80" stroke="#ebebec" stroke-width="1"/><path d="M438.0 46.5 V80" stroke="#ebebec" stroke-width="1"/></svg></div>
<div class="pn" style="left:1334px;top:782.2px;width:530px;height:80px"><div class="pt">Open File Descriptors<svg class="infi" style="margin-left:14.5px" viewBox="0 0 12 12"><circle cx="6" cy="6" r="5.2" fill="none" stroke="#6e7276" stroke-width="1.1"/><path d="M6 5.3 V8.8" stroke="#6e7276" stroke-width="1.2"/><circle cx="6" cy="3.5" r=".75" fill="#6e7276"/></svg></div><div class="a" style="left:9px;top:38px;font-size:12px;line-height:14px;color:#464c54;letter-spacing:.3px">14</div><svg class="a" style="left:-2px;top:-1px" width="510" height="80" viewBox="0 0 510 80"><path d="M26 46.5 H508" stroke="#ebebec" stroke-width="1"/><path d="M31.5 46.5 V80" stroke="#ebebec" stroke-width="1"/><path d="M111.5 46.5 V80" stroke="#ebebec" stroke-width="1"/><path d="M192.5 46.5 V80" stroke="#ebebec" stroke-width="1"/><path d="M273.0 46.5 V80" stroke="#ebebec" stroke-width="1"/><path d="M353.5 46.5 V80" stroke="#ebebec" stroke-width="1"/><path d="M434.0 46.5 V80" stroke="#ebebec" stroke-width="1"/></svg></div>
<div class="a" style="left:1871px;top:152px;width:7px;height:254px;border-radius:4px;background:#dcdddf"></div>
</body></html>
